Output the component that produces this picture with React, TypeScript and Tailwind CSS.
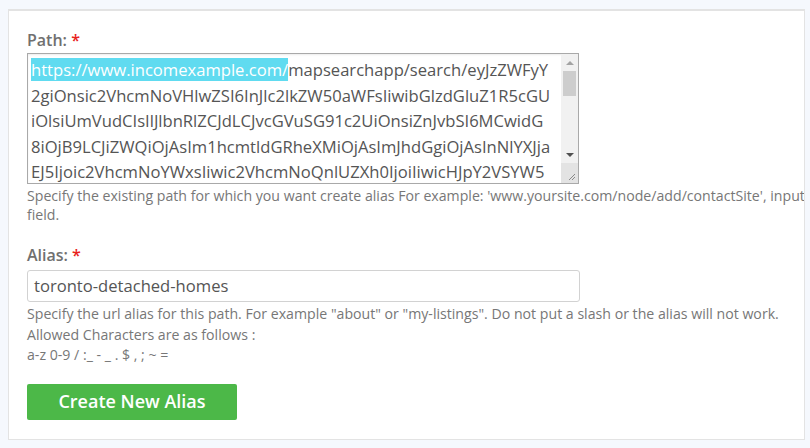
import React from 'react';

const pathLines = [
  'mapsearchapp/search/eyJzZWFyY',
  '2giOnsic2VhcmNoVHlwZSI6InJlc2lkZW50aWFsIiwibGlzdGluZ1R5cGU',
  'iOlsiUmVudCIsIlJlbnRlZCJdLCJvcGVuSG91c2UiOnsiZnJvbSI6MCwidG',
  '8iOjB9LCJiZWQiOjAsIm1hcmtldGRheXMiOjAsImJhdGgiOjAsInNlYXJja',
  'EJ5Ijoic2VhcmNoYWxsIiwic2VhcmNoQnlUZXh0IjoiIiwicHJpY2VSYW5',
];

const Label: React.FC<{ text: string }> = ({ text }) => (
  <label className="block text-[16px] font-semibold leading-5 text-[#707070]">
    {text} <span className="text-[#e8211b]">*</span>
  </label>
);

const FakeScrollbar: React.FC = () => (
  <div className="flex w-[17px] flex-col bg-[#f1f1f1]">
    <div className="flex h-[17px] items-center justify-center">
      <span className="h-0 w-0 border-x-[4px] border-b-[4px] border-x-transparent border-b-[#a3a3a3]" />
    </div>
    <div className="mx-[2px] h-[25px] bg-[#cdcdcd]" />
    <div className="flex-1" />
    <div className="flex h-[17px] items-center justify-center">
      <span className="h-0 w-0 border-x-[4px] border-t-[4px] border-x-transparent border-t-[#505050]" />
    </div>
    <div className="relative h-[20px] bg-[#e3e3e3]">
      <svg className="absolute bottom-[2px] right-[2px]" width="10" height="10" viewBox="0 0 10 10">
        <path d="M9 3L3 9M9 6L6 9" stroke="#8a8a8a" strokeWidth="1" />
      </svg>
    </div>
  </div>
);

export default function App() {
  return (
    <div
      className="min-h-[448px] bg-[#f5f8fd] pl-2 pr-[5px] pt-[9px]"
      style={{ fontFamily: '"Open Sans", "Noto Sans", sans-serif' }}
    >
      <div className="h-[431px] overflow-hidden border border-t-2 border-[#e3e3e3] bg-white pl-[18px] pt-[19px]">
        <Label text="Path:" />
        <div className="mt-[3px] flex h-[131px] w-[552px] border border-[#a9a9a9] bg-white shadow-[inset_0_1px_2px_rgba(0,0,0,0.08)]">
          <div className="flex-1 overflow-hidden pl-[3px] pt-[3px] text-[16.6px] leading-[25.5px] text-[#555]">
            <div className="whitespace-nowrap">
              <span className="bg-[#60dbf0] text-white">https://www.incomexample.com/</span>
              {pathLines[0]}
            </div>
            {pathLines.slice(1).map((l) => (
              <div key={l} className="whitespace-nowrap">
                {l}
              </div>
            ))}
          </div>
          <FakeScrollbar />
        </div>
        <p className="mt-[2px] whitespace-nowrap text-[14.15px] leading-[19px] text-[#777]">
          Specify the existing path for which you want create alias For example: 'www.yoursite.com/node/add/contactSite', input
          <br />
          field.
        </p>

        <div className="mt-[21px]">
          <Label text="Alias:" />
        </div>
        <div className="mt-[5px] flex h-[32px] w-[553px] items-center rounded-[3px] border border-[#d2d2d2] bg-white px-[6px] text-[16.6px] text-[#555]">
          toronto-detached-homes
        </div>
        <p className="mt-[2px] text-[14.15px] leading-[20.5px] text-[#777]">
          Specify the url alias for this path. For example "about" or "my-listings". Do not put a slash or the alias will not work.
          <br />
          Allowed Characters are as follows :
          <br />
          a-z 0-9 / :_ - _ . $ , ; ~ =
        </p>

        <button className="mt-[18px] flex h-[36px] w-[210px] items-center justify-center rounded-[2px] bg-[#4cb848] text-[18px] font-semibold text-white">
          Create New Alias
        </button>
      </div>
    </div>
  );
}
